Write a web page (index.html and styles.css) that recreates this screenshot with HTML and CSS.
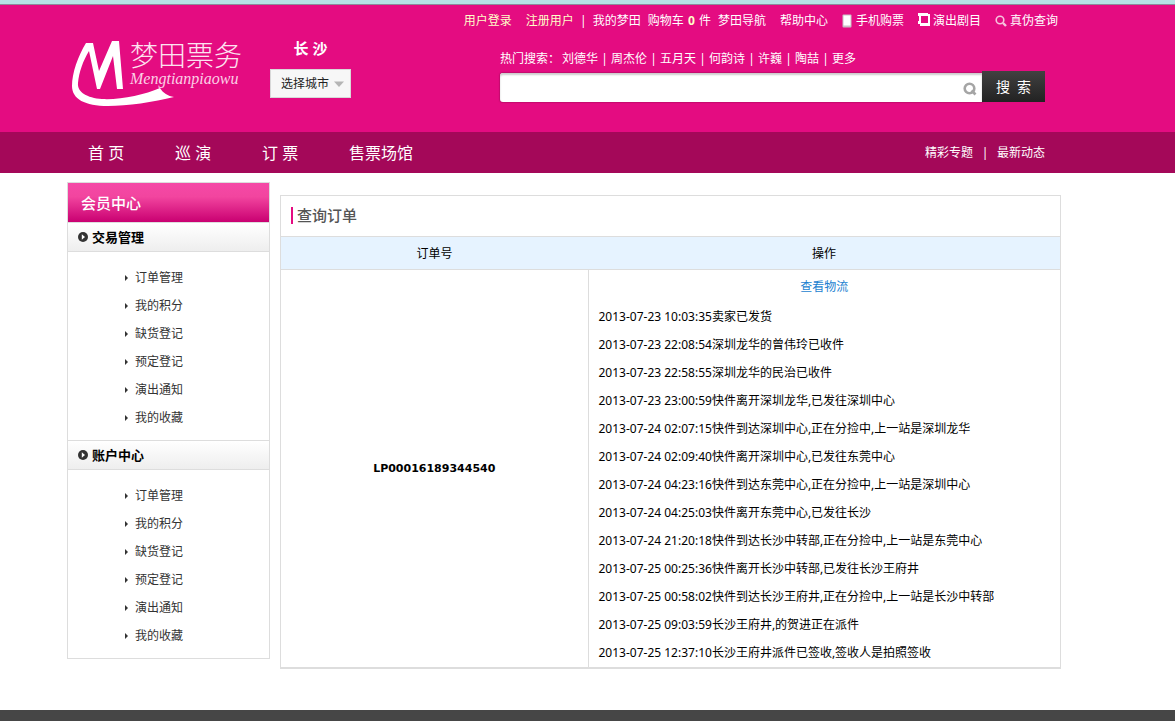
FILE: index.html
```html
<!DOCTYPE html>
<html lang="zh-CN">
<head>
<meta charset="utf-8">
<title>查询订单 - 梦田票务</title>
<link rel="stylesheet" href="styles.css">
</head>
<body>
<header class="header">
  <a class="brand" href="#">
    <svg class="brand-mark" viewBox="0 0 104 67" width="104" height="67" aria-hidden="true">
      <path fill="#fff" d="M14 3h7l6 28L40 1h7l4 48h-6L41 16 28 49h-3L17 11C11 21 7 32 6 43c-1 9 9 15 24 16 18 1 42-4 58-11 3 5 8 8 14 9-20 5-47 9-66 9C13 66 0 59 0 46 0 33 6 16 14 3z"/>
    </svg>
    <span class="brand-text">
      <span class="brand-name">梦田票务</span>
      <span class="brand-latin">Mengtianpiaowu</span>
    </span>
  </a>
  <div class="city">
    <strong class="city-name">长 沙</strong>
    <div class="city-box">
      <select class="city-select" aria-label="选择城市"><option>选择城市</option></select>
      <svg class="city-arrow" viewBox="0 0 10 6" width="10" height="6" aria-hidden="true"><path d="M0 .5h10L5 6z" fill="#b5b5b5"/></svg>
    </div>
  </div>
  <div class="header-right">
    <nav class="top-links">
      <a class="account" href="#">用户登录</a>
      <a class="account register" href="#">注册用户</a>
      <span class="bar">|</span>
      <a href="#">我的梦田</a>
      <a class="cart" href="#">购物车 <b>0</b> 件</a>
      <a class="guide" href="#">梦田导航</a>
      <a class="spaced" href="#">帮助中心</a>
      <a class="with-icon spaced" href="#"><svg viewBox="0 0 10 15" width="10" height="15" aria-hidden="true"><rect x=".5" y=".5" width="9" height="13" rx="1" fill="#c9c0c5"/><rect x="1.500" y="1.500" width="7" height="10" fill="#fff"/></svg>手机购票</a>
      <a class="with-icon tight spaced" href="#"><svg viewBox="0 0 12 16" width="12" height="16" aria-hidden="true"><path fill="#fff" fill-rule="evenodd" d="M0 0h10v1h2v12H2v-2H0V8h1V3H0zM3 3v7h7V3z"/></svg>演出剧目</a>
      <a class="with-icon tight spaced" href="#"><svg viewBox="0 0 12 12" width="12" height="12" aria-hidden="true"><circle cx="5" cy="5" r="3.800" fill="none" stroke="#f6c3dd" stroke-width="1.600"/><path d="M8 8l3 3" stroke="#f6c3dd" stroke-width="2.400"/></svg>真伪查询</a>
    </nav>
    <div class="search">
      <p class="hot"><span class="hot-label">热门搜索：</span><a href="#">刘德华</a><i>|</i><a href="#">周杰伦</a><i>|</i><a href="#">五月天</a><i>|</i><a href="#">何韵诗</a><i>|</i><a href="#">许巍</a><i>|</i><a href="#">陶喆</a><i>|</i><a href="#">更多</a></p>
      <form class="search-form">
        <div class="search-field">
          <input type="text" aria-label="搜索">
          <svg class="search-icon" viewBox="0 0 14 14" width="14" height="14" aria-hidden="true"><circle cx="6.500" cy="6.500" r="4.800" fill="none" stroke="#a5a5a5" stroke-width="2.600"/><path d="M8.500 8.500l4 4" stroke="#a5a5a5" stroke-width="2.600"/></svg>
        </div>
        <button type="button">搜&ensp;索</button>
      </form>
    </div>
  </div>
</header>
<nav class="main-nav">
  <ul>
    <li><a href="#">首 页</a></li>
    <li><a href="#">巡 演</a></li>
    <li><a href="#">订 票</a></li>
    <li><a href="#">售票场馆</a></li>
  </ul>
  <div class="sub-links"><a href="#">精彩专题</a><span>|</span><a href="#">最新动态</a></div>
</nav>
<main class="content">
  <aside class="sidebar">
    <h2>会员中心</h2>
    <h3><svg viewBox="0 0 10 10" width="10" height="10" aria-hidden="true"><circle cx="5" cy="5" r="5" fill="#333"/><path d="M3.800 2.200L7 5 3.800 7.800z" fill="#fff"/></svg>交易管理</h3>
    <ul>
      <li><a href="#">订单管理</a></li>
      <li><a href="#">我的积分</a></li>
      <li><a href="#">缺货登记</a></li>
      <li><a href="#">预定登记</a></li>
      <li><a href="#">演出通知</a></li>
      <li><a href="#">我的收藏</a></li>
    </ul>
    <h3><svg viewBox="0 0 10 10" width="10" height="10" aria-hidden="true"><circle cx="5" cy="5" r="5" fill="#333"/><path d="M3.800 2.200L7 5 3.800 7.800z" fill="#fff"/></svg>账户中心</h3>
    <ul>
      <li><a href="#">订单管理</a></li>
      <li><a href="#">我的积分</a></li>
      <li><a href="#">缺货登记</a></li>
      <li><a href="#">预定登记</a></li>
      <li><a href="#">演出通知</a></li>
      <li><a href="#">我的收藏</a></li>
    </ul>
  </aside>
  <section class="orders">
    <h1><span>查询订单</span></h1>
    <table>
      <thead><tr><th class="col-id">订单号</th><th>操作</th></tr></thead>
      <tbody>
        <tr>
          <td class="order-id">LP00016189344540</td>
          <td class="order-log">
            <a class="track" href="#">查看物流</a>
            <ul>
              <li><time>2013-07-23 10:03:35</time>卖家已发货</li>
              <li><time>2013-07-23 22:08:54</time>深圳龙华的曾伟玲已收件</li>
              <li><time>2013-07-23 22:58:55</time>深圳龙华的民治已收件</li>
              <li><time>2013-07-23 23:00:59</time>快件离开深圳龙华,已发往深圳中心</li>
              <li><time>2013-07-24 02:07:15</time>快件到达深圳中心,正在分捡中,上一站是深圳龙华</li>
              <li><time>2013-07-24 02:09:40</time>快件离开深圳中心,已发往东莞中心</li>
              <li><time>2013-07-24 04:23:16</time>快件到达东莞中心,正在分捡中,上一站是深圳中心</li>
              <li><time>2013-07-24 04:25:03</time>快件离开东莞中心,已发往长沙</li>
              <li><time>2013-07-24 21:20:18</time>快件到达长沙中转部,正在分捡中,上一站是东莞中心</li>
              <li><time>2013-07-25 00:25:36</time>快件离开长沙中转部,已发往长沙王府井</li>
              <li><time>2013-07-25 00:58:02</time>快件到达长沙王府井,正在分捡中,上一站是长沙中转部</li>
              <li><time>2013-07-25 09:03:59</time>长沙王府井,的贺进正在派件</li>
              <li><time>2013-07-25 12:37:10</time>长沙王府井派件已签收,签收人是拍照签收</li>
            </ul>
          </td>
        </tr>
      </tbody>
    </table>
  </section>
</main>
<footer class="footer"></footer>
</body>
</html>
```
FILE: styles.css
```css
* { box-sizing: border-box; margin: 0; padding: 0; }
html { height: 100%; }
body {
  min-height: 100%;
  display: flex;
  flex-direction: column;
  font: 12px/16px "Noto Sans", "Noto Sans CJK SC", sans-serif;
  color: #000;
  background: #fff;
  border-top: 4px solid #b6e1e5;
}
a { color: inherit; text-decoration: none; white-space: nowrap; }
ul { list-style: none; }

.header {
  display: flex;
  align-items: flex-start;
  padding: 8px 117px 25px 72px;
  border-top: 1px solid #8b8a9a;
  background: #e40c81;
  color: #fff;
}
.brand { display: flex; width: 198px; padding-top: 27px; }
.brand-mark { flex: none; margin-right: -46px; }
.brand-text { display: flex; flex-direction: column; }
.brand-name {
  font: 300 28px/28px "Noto Sans CJK SC Light", "Noto Sans CJK SC", sans-serif;
  color: #fde3f0;
}
.brand-latin {
  padding-top: 2px;
  font: italic 16px/18px "Liberation Serif", serif;
  color: #fbd0e5;
}
.city { width: 81px; padding-top: 25px; text-align: center; }
.city-name { display: block; font-size: 15px; line-height: 20px; }
.city-box { position: relative; margin-top: 11px; }
.city-select {
  appearance: none;
  display: block;
  width: 100%;
  height: 29px;
  padding: 0 10px;
  border: 1px solid #d8d8d8;
  border-radius: 0;
  background: #f7f7f7;
  font: inherit;
  color: #222;
}
.city-arrow { position: absolute; right: 7px; top: 12px; pointer-events: none; }

.header-right {
  margin-left: auto;
  display: flex;
  flex-direction: column;
  align-items: flex-end;
  gap: 22px;
}
.top-links { display: flex; align-items: center; }
.account { color: #ffffc8; }
.register { margin-left: 14px; }
.bar { width: 19px; text-align: center; }
.cart { margin-left: 7px; }
.cart b { padding: 0 1px; color: #ffffc8; }
.guide { margin-left: 7px; }
.spaced { margin-left: 14px; }
.with-icon { display: flex; align-items: center; gap: 4px; }
.tight { gap: 3px; }
.search { width: 545px; margin-right: 13px; }
.hot { display: flex; }
.hot i { width: 13px; text-align: center; font-style: normal; }
.hot-label { margin-right: 2px; }
.search-form { display: flex; align-items: flex-end; margin-top: 4px; }
.search-field { position: relative; flex: 1; }
.search-field input {
  display: block;
  width: 100%;
  height: 29px;
  padding: 0 32px 0 8px;
  border: 0;
  border-radius: 3px 0 0 3px;
  background: #fff;
  box-shadow: inset 0 2px 2px #ccc, 0 0 1px 1px #c20c6d;
  font: inherit;
  outline: 0;
}
.search-icon { position: absolute; right: 5px; top: 9px; }
.search-form button {
  position: relative;
  width: 63px;
  height: 31px;
  padding-bottom: 2px;
  border: 0;
  background: linear-gradient(#414141, #222);
  color: #fff;
  font: 14px/28px "Noto Sans CJK SC", sans-serif;
}

.main-nav {
  display: flex;
  justify-content: space-between;
  align-items: center;
  height: 41px;
  padding: 0 130px 0 88px;
  background: #a40859;
  color: #fff;
}
.main-nav ul { display: flex; }
.main-nav li { min-width: 87px; font-size: 16px; line-height: 24px; }
.sub-links { display: flex; }
.sub-links span { width: 24px; text-align: center; }

.content {
  display: grid;
  grid-template-columns: 203px 1fr;
  gap: 10px;
  align-items: start;
  padding: 9px 114px 41px 67px;
}
.sidebar { border: 1px solid #ddd; border-bottom: 0; }
.sidebar h2 {
  height: 39px;
  padding-left: 13px;
  background: linear-gradient(#f549a6, #f2459f 35%, #c90071);
  color: #fff;
  font-size: 15px;
  font-weight: 500;
  line-height: 40px;
}
.sidebar h3 {
  display: flex;
  align-items: center;
  gap: 4px;
  height: 30px;
  padding-left: 10px;
  border-top: 1px solid #ddd;
  border-bottom: 1px solid #ddd;
  background: linear-gradient(#fff, #eee);
  font-size: 13px;
}
.sidebar ul { padding: 12px 0 8px 57px; }
.sidebar ul:last-child { border-bottom: 1px solid #ddd; }
.sidebar li {
  display: flex;
  align-items: center;
  gap: 7px;
  height: 28px;
  color: #333;
}
.sidebar li::before {
  content: "";
  border: 3px solid transparent;
  border-left-color: #333;
  border-right-width: 0;
}

.orders { margin-top: 13px; border: 1px solid #ddd; border-bottom-width: 2px; }
.orders h1 { padding: 11px 10px 12px; line-height: 17px; }
.orders h1 span {
  display: block;
  padding-left: 4px;
  border-left: 2px solid #e40c81;
  font-size: 15px;
  font-weight: 500;
  color: #555;
}
.orders table { width: 100%; border-collapse: collapse; table-layout: fixed; }
.orders th {
  height: 33px;
  padding-top: 2px;
  border-top: 1px solid #ddd;
  border-bottom: 1px solid #ddd;
  background: #e6f3ff;
  font-weight: 400;
}
.col-id { width: 307px; }
.order-id {
  border-right: 1px solid #ddd;
  text-align: center;
  font: bold 11px/16px "DejaVu Sans", sans-serif;
}
.track { display: block; text-align: center; line-height: 33px; color: #1b7fd0; }
.order-log ul { padding-left: 10px; }
.order-log li { line-height: 28px; }

.footer { flex: 1; min-height: 12px; background: #464646; }
```
